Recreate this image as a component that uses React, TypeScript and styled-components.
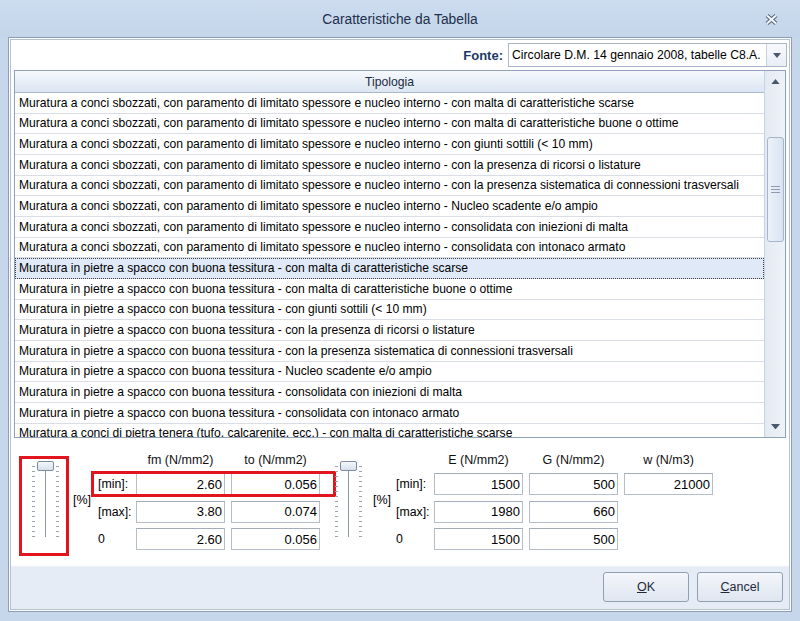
import React, { useId } from 'react';
import styled, { createGlobalStyle } from 'styled-components';

const GlobalStyle = createGlobalStyle`
  html, body {
    margin: 0;
    padding: 0;
    background: #c6d6eb;
  }
  body {
    font-family: "Liberation Sans", Arial, sans-serif;
    font-size: 12px;
    color: #000;
  }
`;

const Window = styled.div`
  width: 800px;
  height: 621px;
  box-sizing: border-box;
  background: #c6d6eb;
  display: flex;
  flex-direction: column;
`;

const TitleBar = styled.div`
  height: 37px;
  flex-shrink: 0;
  display: flex;
  align-items: center;
  justify-content: center;
  position: relative;
  background: linear-gradient(#cddcef, #c4d5ea);
`;

const Title = styled.span`
  font-size: 13.8px;
  color: #1d2f4a;
  margin-top: 1px;
`;

const CloseButton = styled.div`
  position: absolute;
  right: 21px;
  top: 13px;
  width: 15px;
  height: 13px;
  display: flex;
`;

const Client = styled.div`
  flex: 1;
  margin: 0 8px 9px 8px;
  border: 1px solid #8e9db5;
  padding: 1px;
  background: #fdfdfe;
  display: flex;
  min-height: 0;
`;

const Inner = styled.div`
  flex: 1;
  border: 1px solid #b3c0d2;
  display: flex;
  flex-direction: column;
  min-height: 0;
`;

const TopBar = styled.div`
  height: 30px;
  flex-shrink: 0;
  display: flex;
  align-items: center;
  justify-content: flex-end;
  padding-right: 2px;
  background: #fff;
`;

const SourceLabel = styled.span`
  font-weight: bold;
  font-size: 13px;
  color: #1d3a67;
  margin-right: 5px;
`;

const Combo = styled.div`
  display: flex;
  height: 24px;
  box-sizing: border-box;
  border: 1px solid #abb6c6;
  background: #fff;
`;

const ComboText = styled.div`
  width: 254px;
  padding-left: 3px;
  display: flex;
  align-items: center;
  font-size: 12.2px;
  white-space: nowrap;
  overflow: hidden;
`;

const ComboButton = styled.div`
  width: 19px;
  display: flex;
  align-items: center;
  justify-content: center;
  border-left: 1px solid #c9d2df;
  background: linear-gradient(#f7f9fc, #e9eef5);
`;

const GridBox = styled.div`
  height: 368px;
  flex-shrink: 0;
  margin: 0 3px;
  box-sizing: border-box;
  border: 1px solid #8fa0b8;
  display: flex;
  background: #fff;
`;

const ListArea = styled.div`
  flex: 1;
  min-width: 0;
  display: flex;
  flex-direction: column;
  overflow: hidden;
`;

const HeaderCell = styled.div`
  height: 22px;
  flex-shrink: 0;
  box-sizing: border-box;
  display: flex;
  align-items: center;
  justify-content: center;
  background: linear-gradient(#f6f9fd, #dbe5f2);
  border-bottom: 1px solid #a9b8cc;
  color: #1c2a3e;
  font-size: 12.2px;
`;

const Row = styled.div<{ $selected?: boolean }>`
  height: 20.67px;
  flex-shrink: 0;
  box-sizing: border-box;
  padding-left: 4px;
  display: flex;
  align-items: center;
  white-space: nowrap;
  overflow: hidden;
  font-size: 12.1px;
  border-bottom: 1px solid #d9dee6;
  background: ${p => (p.$selected ? '#dfe9f8' : '#fff')};
  outline: ${p => (p.$selected ? '1px dotted #3a3f48' : 'none')};
  outline-offset: -1px;
`;

const ScrollBar = styled.div`
  width: 21px;
  flex-shrink: 0;
  box-sizing: border-box;
  border-left: 1px solid #c9d3e0;
  background: linear-gradient(90deg, #e4eaf3, #eef2f8);
  display: flex;
  flex-direction: column;
`;

const ScrollArrow = styled.div`
  height: 21px;
  flex-shrink: 0;
  display: flex;
  align-items: center;
  justify-content: center;
`;

const ScrollThumb = styled.div`
  margin: 45px 1px 0 2px;
  height: 105px;
  box-sizing: border-box;
  border: 1px solid #a7b6cb;
  border-radius: 3px;
  background: linear-gradient(90deg, #edf2f9, #d9e3f0);
  display: flex;
  align-items: center;
  justify-content: center;
`;

const Spacer = styled.div`
  flex: 1;
`;

const BottomPanel = styled.div`
  height: 128px;
  flex-shrink: 0;
  display: flex;
  align-items: flex-start;
  padding: 14.5px 0 0 8px;
  box-sizing: border-box;
  background: #fff;
`;

const SliderBox = styled.div`
  width: 50px;
  height: 100px;
  box-sizing: border-box;
  border: 3px solid #e2141d;
  padding: 2px 0 0 9px;
  margin-top: 3.5px;
`;

const SliderHolder = styled.div<{ $left: number }>`
  margin: 8.5px 0 0 ${p => p.$left}px;
`;

const Percent = styled.span<{ $left: number }>`
  margin: 40px 0 0 ${p => p.$left}px;
  font-size: 12.5px;
  width: 18px;
`;

const FieldGroup = styled.div<{ $left: number }>`
  margin-left: ${p => p.$left}px;
  display: flex;
  flex-direction: column;
  gap: 5.5px;
`;

const FieldRow = styled.div<{ $highlight?: boolean }>`
  height: 22px;
  display: flex;
  align-items: center;
  gap: 6px;
  padding-right: ${p => (p.$highlight ? 14 : 0)}px;
  outline: ${p => (p.$highlight ? '3px solid #e2141d' : 'none')};
  outline-offset: -1px;
`;

const HeadRow = styled.div`
  height: 15px;
  display: flex;
  align-items: center;
  gap: 6px;
`;

const RowLabel = styled.span<{ $width: number }>`
  width: ${p => p.$width}px;
  padding-left: 5px;
  box-sizing: border-box;
  flex-shrink: 0;
  font-size: 12.3px;
  margin-right: 1px;
`;

const ColHead = styled.span`
  width: 89px;
  text-align: center;
  font-size: 12.5px;
  color: #111;
`;

const Field = styled.div`
  width: 89px;
  height: 22px;
  box-sizing: border-box;
  border: 1px solid #b5bdc8;
  border-top-color: #a3acb9;
  background: #fff;
  display: flex;
  align-items: center;
  justify-content: flex-end;
  padding-right: 2px;
  font-size: 13px;
`;

const ButtonBar = styled.div`
  flex: 1;
  display: flex;
  justify-content: flex-end;
  align-items: flex-start;
  gap: 8px;
  padding: 5px 6px 0 0;
  background: #e6ecf5;
  border-top: 1px solid #edf1f7;
`;

const Button = styled.button`
  width: 86px;
  height: 30px;
  box-sizing: border-box;
  border: 1px solid #909fb4;
  border-radius: 3px;
  background: linear-gradient(#f3f6fa, #dfe6f0);
  font-family: "Liberation Sans", Arial, sans-serif;
  font-size: 12.5px;
  color: #1d2a3c;
  padding: 0;
`;

const rows: string[] = [
  'Muratura a conci sbozzati, con paramento di limitato spessore e nucleo interno - con malta di caratteristiche scarse',
  'Muratura a conci sbozzati, con paramento di limitato spessore e nucleo interno - con malta di caratteristiche buone o ottime',
  'Muratura a conci sbozzati, con paramento di limitato spessore e nucleo interno - con giunti sottili (< 10 mm)',
  'Muratura a conci sbozzati, con paramento di limitato spessore e nucleo interno - con la presenza di ricorsi o listature',
  'Muratura a conci sbozzati, con paramento di limitato spessore e nucleo interno - con la presenza sistematica di connessioni trasversali',
  'Muratura a conci sbozzati, con paramento di limitato spessore e nucleo interno - Nucleo scadente e/o ampio',
  'Muratura a conci sbozzati, con paramento di limitato spessore e nucleo interno - consolidata con iniezioni di malta',
  'Muratura a conci sbozzati, con paramento di limitato spessore e nucleo interno - consolidata con intonaco armato',
  'Muratura in pietre a spacco con buona tessitura - con malta di caratteristiche scarse',
  'Muratura in pietre a spacco con buona tessitura - con malta di caratteristiche buone o ottime',
  'Muratura in pietre a spacco con buona tessitura - con giunti sottili (< 10 mm)',
  'Muratura in pietre a spacco con buona tessitura - con la presenza di ricorsi o listature',
  'Muratura in pietre a spacco con buona tessitura - con la presenza sistematica di connessioni trasversali',
  'Muratura in pietre a spacco con buona tessitura - Nucleo scadente e/o ampio',
  'Muratura in pietre a spacco con buona tessitura - consolidata con iniezioni di malta',
  'Muratura in pietre a spacco con buona tessitura - consolidata con intonaco armato',
  'Muratura a conci di pietra tenera (tufo, calcarenite, ecc.) - con malta di caratteristiche scarse',
];

const Triangle = ({ up, size = 9 }: { up?: boolean; size?: number }) => (
  <svg width={size} height={size / 2 + 1} viewBox="0 0 10 6">
    {up ? <polygon points="0,6 10,6 5,0" fill="#4b586b" /> : <polygon points="0,0 10,0 5,6" fill="#4b586b" />}
  </svg>
);

const CloseIcon = () => (
  <svg width="15" height="13" viewBox="0 0 15 13">
    <line x1="3" y1="2.5" x2="12" y2="10.5" stroke="#56667c" strokeWidth="4.2" />
    <line x1="12" y1="2.5" x2="3" y2="10.5" stroke="#56667c" strokeWidth="4.2" />
    <line x1="3" y1="2.5" x2="12" y2="10.5" stroke="#f4f7fb" strokeWidth="2" />
    <line x1="12" y1="2.5" x2="3" y2="10.5" stroke="#f4f7fb" strokeWidth="2" />
  </svg>
);

const Grip = () => (
  <svg width="9" height="7" viewBox="0 0 9 7">
    <line x1="0" y1="0.5" x2="9" y2="0.5" stroke="#8d9cb1" />
    <line x1="0" y1="3.5" x2="9" y2="3.5" stroke="#8d9cb1" />
    <line x1="0" y1="6.5" x2="9" y2="6.5" stroke="#8d9cb1" />
  </svg>
);

const ticks = Array.from({ length: 15 }, (_, i) => 5 + i * 5);

const Slider = () => {
  const id = useId();
  return (
    <svg width="30" height="80" viewBox="0 0 30 80">
      <defs>
        <linearGradient id={id} x1="0" y1="0" x2="0" y2="1">
          <stop offset="0" stopColor="#f7f9fc" />
          <stop offset="1" stopColor="#d5deea" />
        </linearGradient>
      </defs>
      {ticks.map(y => (
        <g key={y}>
          <line x1="1" x2="4" y1={y + 0.5} y2={y + 0.5} stroke="#9aa3b0" />
          <line x1="25" x2="28" y1={y + 0.5} y2={y + 0.5} stroke="#9aa3b0" />
        </g>
      ))}
      <line x1="14.5" y1="9" x2="14.5" y2="76" stroke="#8e97a5" />
      <rect x="6.5" y="0.5" width="16" height="9" rx="1.5" fill={`url(#${id})`} stroke="#7d8ca2" />
    </svg>
  );
};

const App: React.FC = () => {
  return (
    <Window>
      <GlobalStyle />
      <TitleBar>
        <Title>Caratteristiche da Tabella</Title>
        <CloseButton>
          <CloseIcon />
        </CloseButton>
      </TitleBar>
      <Client>
        <Inner>
          <TopBar>
            <SourceLabel>Fonte:</SourceLabel>
            <Combo>
              <ComboText>Circolare D.M. 14 gennaio 2008, tabelle C8.A.</ComboText>
              <ComboButton>
                <Triangle size={8} />
              </ComboButton>
            </Combo>
          </TopBar>

          <GridBox>
            <ListArea>
              <HeaderCell>Tipologia</HeaderCell>
              {rows.map((text, i) => (
                <Row key={i} $selected={i === 8}>
                  {text}
                </Row>
              ))}
            </ListArea>
            <ScrollBar>
              <ScrollArrow>
                <Triangle up />
              </ScrollArrow>
              <ScrollThumb>
                <Grip />
              </ScrollThumb>
              <Spacer />
              <ScrollArrow>
                <Triangle />
              </ScrollArrow>
            </ScrollBar>
          </GridBox>

          <BottomPanel>
            <SliderBox>
              <Slider />
            </SliderBox>
            <Percent $left={4}>[%]</Percent>
            <FieldGroup $left={2}>
              <HeadRow>
                <RowLabel $width={36} />
                <ColHead>fm (N/mm2)</ColHead>
                <ColHead>to (N/mm2)</ColHead>
              </HeadRow>
              <FieldRow $highlight>
                <RowLabel $width={36}>[min]:</RowLabel>
                <Field>2.60</Field>
                <Field>0.056</Field>
              </FieldRow>
              <FieldRow>
                <RowLabel $width={36}>[max]:</RowLabel>
                <Field>3.80</Field>
                <Field>0.074</Field>
              </FieldRow>
              <FieldRow>
                <RowLabel $width={36}>0</RowLabel>
                <Field>2.60</Field>
                <Field>0.056</Field>
              </FieldRow>
            </FieldGroup>
            <SliderHolder $left={0}>
              <Slider />
            </SliderHolder>
            <Percent $left={9}>[%]</Percent>
            <FieldGroup $left={0}>
              <HeadRow>
                <RowLabel $width={36} />
                <ColHead>E (N/mm2)</ColHead>
                <ColHead>G (N/mm2)</ColHead>
                <ColHead>w (N/m3)</ColHead>
              </HeadRow>
              <FieldRow>
                <RowLabel $width={36}>[min]:</RowLabel>
                <Field>1500</Field>
                <Field>500</Field>
                <Field>21000</Field>
              </FieldRow>
              <FieldRow>
                <RowLabel $width={36}>[max]:</RowLabel>
                <Field>1980</Field>
                <Field>660</Field>
              </FieldRow>
              <FieldRow>
                <RowLabel $width={36}>0</RowLabel>
                <Field>1500</Field>
                <Field>500</Field>
              </FieldRow>
            </FieldGroup>
          </BottomPanel>

          <ButtonBar>
            <Button>
              <u>O</u>K
            </Button>
            <Button>
              <u>C</u>ancel
            </Button>
          </ButtonBar>
        </Inner>
      </Client>
    </Window>
  );
};

export default App;
